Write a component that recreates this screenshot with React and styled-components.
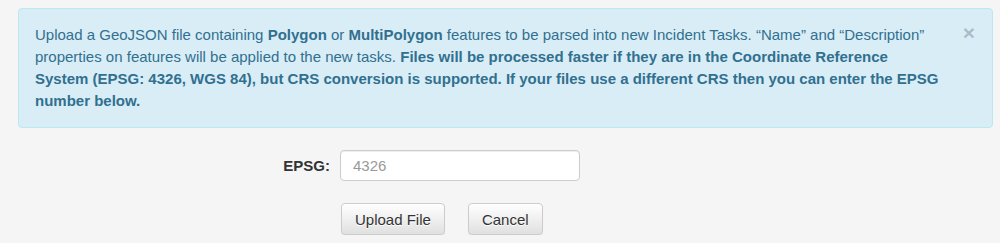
import React from "react";
import styled, { createGlobalStyle } from "styled-components";

const GlobalStyle = createGlobalStyle`
  html, body {
    margin: 0;
    padding: 0;
    background: #f5f5f5;
    font-family: "Liberation Sans", Arial, sans-serif;
    color: #333;
  }
`;

const Page = styled.div`
  padding: 8px 7px 0 18px;
`;

const Alert = styled.div`
  position: relative;
  background: #d9edf7;
  border: 1px solid #bce8f1;
  border-radius: 4px;
  color: #31708f;
  font-size: 15px;
  line-height: 22px;
  padding: 15px 48px 15px 16px;
  min-height: 87px;
  b {
    font-weight: bold;
  }
`;

const Close = styled.button`
  position: absolute;
  top: 13px;
  right: 17px;
  padding: 0;
  border: 0;
  background: transparent;
  font-family: "Liberation Sans", Arial, sans-serif;
  font-size: 21px;
  font-weight: bold;
  line-height: 1;
  color: #000;
  opacity: 0.2;
  cursor: pointer;
`;

const Form = styled.form`
  display: flex;
  flex-direction: column;
  gap: 22px;
  margin-top: 22px;
`;

const Row = styled.div`
  display: flex;
  align-items: center;
  gap: ${(p) => p.$gap || 10}px;
`;

const Label = styled.label`
  width: 312px;
  text-align: right;
  font-size: 15px;
  font-weight: bold;
  color: #333;
`;

const Spacer = styled.div`
  width: 300px;
`;

const Input = styled.input`
  width: 240px;
  height: 31px;
  box-sizing: border-box;
  padding: 6px 12px;
  font-family: "Liberation Sans", Arial, sans-serif;
  font-size: 15px;
  color: #555;
  background: #fff;
  border: 1px solid #ccc;
  border-radius: 4px;
  box-shadow: inset 0 1px 1px rgba(0, 0, 0, 0.075);
  &::placeholder {
    color: #999;
  }
`;

const Button = styled.button`
  height: 32px;
  padding: 0 13px;
  font-family: "Liberation Sans", Arial, sans-serif;
  font-size: 15px;
  color: #333;
  text-shadow: 0 1px 0 #fff;
  background: linear-gradient(#fff 0%, #e0e0e0 100%);
  border: 1px solid #ccc;
  border-radius: 4px;
  box-shadow: inset 0 1px 0 rgba(255, 255, 255, 0.15), 0 1px 1px rgba(0, 0, 0, 0.075);
  cursor: pointer;
`;

const App = () => {
  return (
    <>
      <GlobalStyle />
      <Page>
        <Alert>
          <Close type="button">×</Close>
          Upload a GeoJSON file containing <b>Polygon</b> or <b>MultiPolygon</b> features to be parsed into new Incident Tasks. “Name” and “Description” properties on features will be applied to the new tasks.{" "}
          <b>
            Files will be processed faster if they are in the Coordinate Reference System (EPSG: 4326, WGS 84), but CRS conversion is supported. If your files use a different CRS then you can enter the EPSG number below.
          </b>
        </Alert>
        <Form onSubmit={(e) => e.preventDefault()}>
          <Row>
            <Label>EPSG:</Label>
            <Input type="text" placeholder="4326" />
          </Row>
          <Row $gap={23}>
            <Spacer />
            <Button type="button">Upload File</Button>
            <Button type="button">Cancel</Button>
          </Row>
        </Form>
      </Page>
    </>
  );
};

export default App;
